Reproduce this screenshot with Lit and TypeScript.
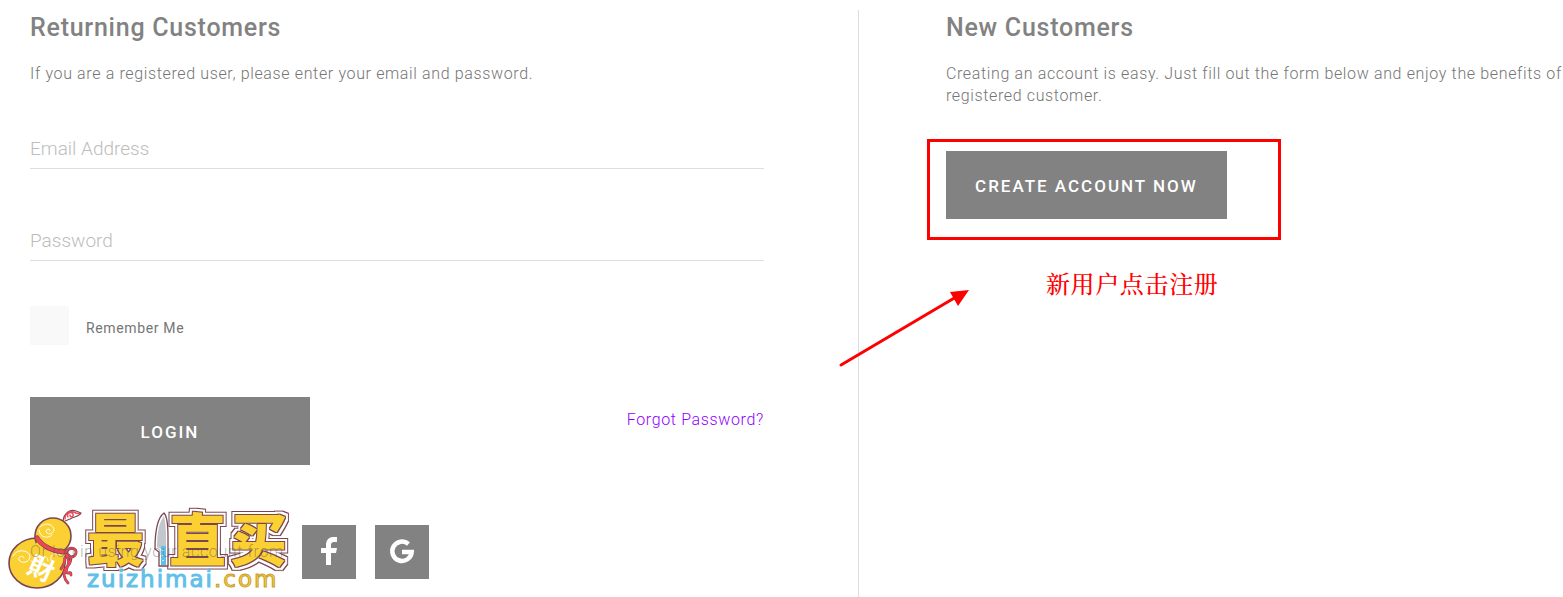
import { LitElement, html, css } from "lit";
import { customElement } from "lit/decorators.js";

@customElement("shop-logo")
class ShopLogo extends LitElement {
  static styles = css`
    :host { display: block; }
    .art { display: block; width: 288px; height: 84px; overflow: visible; }
    .name { font-family: "Noto Sans CJK SC", sans-serif; font-weight: 900; font-size: 57px; letter-spacing: 0; fill: #fbd033; }
    .domain { font-family: "DejaVu Sans", sans-serif; font-weight: 400; font-size: 23px; letter-spacing: 2px; stroke-width: 1px; }
    .blue { fill: #62bfe8; stroke: #62bfe8; }
    .gold { fill: #fbd033; stroke: #c79f35; }
    .seal { font-family: "Noto Sans CJK SC", sans-serif; font-weight: 700; font-size: 26px; letter-spacing: 0; fill: #ffffff; }
  `;

  render() {
    return html`
      <svg class="art" viewBox="0 0 288 84" role="img" aria-label="zuizhimai.com">
        <defs>
          <filter id="rings" x="-10%" y="-20%" width="120%" height="140%" color-interpolation-filters="sRGB">
            <feMorphology in="SourceAlpha" operator="dilate" radius="4" result="outer"/>
            <feMorphology in="SourceAlpha" operator="dilate" radius="3" result="middle"/>
            <feMorphology in="SourceAlpha" operator="dilate" radius="1" result="inner"/>
            <feFlood flood-color="#7b4650" result="brown"/>
            <feFlood flood-color="#ffffff" result="white"/>
            <feComposite in="brown" in2="outer" operator="in" result="rim"/>
            <feComposite in="white" in2="middle" operator="in" result="halo"/>
            <feComposite in="brown" in2="inner" operator="in" result="edge"/>
            <feMerge>
              <feMergeNode in="rim"/><feMergeNode in="halo"/><feMergeNode in="edge"/><feMergeNode in="SourceGraphic"/>
            </feMerge>
          </filter>
        </defs>
        <g fill="none" stroke-linecap="round" stroke-linejoin="round">
          <path d="M58 12C59 4 65 0 71 2L76 4C74 8 70 7 65 10L60 12" fill="#fff" stroke="#7b4650" stroke-width="1.2"/>
          <path d="M60 10C60 4 65 1 71 4L75 5M63 8C61 4 66 2 68 5C69 8 65 9 65 6" stroke="#ee4655" stroke-width="1.4"/>
          <ellipse cx="32" cy="54" rx="28" ry="25" fill="#fbd033" stroke="#7b4650" stroke-width="1.6"/>
          <circle cx="48" cy="27" r="18" fill="#fbd033" stroke="#7b4650" stroke-width="1.6"/>
          <path d="M32 33C39 40 50 45 62 43L57 51C47 50 36 46 29 38Z" fill="#fbd033"/>
          <path d="M35 18C41 12 49 16 49 21C48 26 41 26 41 22C42 19 46 20 45 22M34 21C35 29 43 30 47 26" stroke="#fff" stroke-width="1"/>
          <path d="M8 47C11 40 23 40 25 47C25 54 16 55 14 51C13 47 18 46 19 49M26 52C32 55 37 50 34 47C32 45 28 48 30 50M47 54C43 47 49 42 55 46M43 52C43 46 36 46 36 50" stroke="#fff" stroke-width="1"/>
          <path d="M32 29C37 37 48 43 61 43" stroke="#7b4650" stroke-width="5"/>
          <path d="M32 29C37 37 48 43 61 43" stroke="#ee4655" stroke-width="3.6"/>
          <path d="M61 43C65 37 72 39 71 44C70 49 64 49 62 45C68 48 66 54 62 58C57 63 59 70 63 74M61 46C67 53 61 58 61 63C63 66 66 61 66 66M60 49C60 57 57 57 56 60" stroke="#7b4650" stroke-width="2.8"/>
          <path d="M61 43C65 37 72 39 71 44C70 49 64 49 62 45C68 48 66 54 62 58C57 63 59 70 63 74M61 46C67 53 61 58 61 63C63 66 66 61 66 66M60 49C60 57 57 57 56 60" stroke="#ee4655" stroke-width="1.8"/>
        </g>
        <text class="seal" x="23" y="69" transform="rotate(24 36 60)">財</text>
        <g filter="url(#rings)">
          <text class="name" y="52"><tspan x="82">最</tspan><tspan x="164">直</tspan><tspan x="225">买</tspan></text>
        </g>
        <path d="M159 4C152 9 150 24 150 40L154 43V57H163V28C163 18 162 7 159 4Z" fill="#fff" stroke="#7b4650" stroke-width="1.3"/>
        <path d="M159 7C154 13 152 24 152 38L156 40H161V28C161 18 160 11 159 7Z" fill="#c2c7ce"/>
        <path d="M156 37H161V56H156Z" fill="#62bfe8"/>
        <path d="M158 41V42M158 46V47M158 51V52" stroke="#fff" stroke-width="1.2"/>
        <text class="domain" x="82" y="78"><tspan class="blue">zuizhimai</tspan><tspan class="gold">.com</tspan></text>
      </svg>`;
  }
}

@customElement("app-root")
class AppRoot extends LitElement {
  static styles = css`
    :host {
      display: block;
      font-family: Roboto, sans-serif;
      font-size: 16px;
      font-weight: 300;
      line-height: 22px;
      letter-spacing: 0.04em;
      color: #757575;
      background: #ffffff;
    }
    * { box-sizing: border-box; }
    .page { display: grid; grid-template-columns: 61fr 50fr; min-height: 100vh; padding-top: 10px; }
    .returning { position: relative; padding: 0 94px 16px 30px; border-right: 1px solid #dddddd; }
    .new { padding-left: 87px; }
    h1 { margin: 0; font-size: 25px; line-height: 36px; font-weight: 500; letter-spacing: 0.03em; color: #828282; }
    p { margin: 17px 0 0; }
    .field { display: grid; height: 43px; margin-top: 49px; border-bottom: 1px solid #dddddd; font-size: 19px; letter-spacing: 0; }
    .field:first-child { margin-top: 41px; }
    .field > * { grid-area: 1 / 1; }
    .field label { align-self: center; padding-top: 3px; color: #bdbdbd; pointer-events: none; }
    .field input { width: 100%; border: 0; padding: 3px 0 0; background: none; font: inherit; color: #757575; outline: 0; }
    .field input:not(:placeholder-shown) + label { visibility: hidden; }
    .remember { display: flex; align-items: center; gap: 17px; width: max-content; margin-top: 45px; font-size: 14px; font-weight: 400; }
    .remember span { padding-top: 4px; }
    .tick { appearance: none; width: 39px; height: 39px; margin: 0; background: #f9f9f9; }
    .tick:checked { background: #828282; }
    .actions { display: flex; justify-content: space-between; align-items: flex-start; margin-top: 52px; }
    .button { width: 280px; height: 68px; border: 0; padding: 1px 0 0; background: #828282; color: #ffffff; font: inherit; font-size: 17px; font-weight: 500; letter-spacing: 2px; cursor: pointer; }
    .call .button { width: 100%; }
    .forgot { margin-top: 12px; color: #8f00ff; text-decoration: none; }
    .social { display: flex; align-items: center; gap: 19px; margin-top: 60px; }
    .hint { position: relative; z-index: 1; flex: 0 0 253px; min-width: 0; white-space: nowrap; color: rgba(80, 80, 80, 0.45); pointer-events: none; }
    .network { display: grid; place-items: center; width: 54px; height: 54px; border: 0; padding: 0; background: #828282; cursor: pointer; }
    .network svg { display: block; width: 30px; height: 30px; }
    .logo { position: absolute; left: 5px; bottom: 4px; }
    .call { position: relative; width: 281px; margin-top: 44px; }
    .mark { position: absolute; left: -19px; top: -12px; width: 354px; height: 101px; border: 3px solid #ff0000; pointer-events: none; }
    .note { position: absolute; left: 100px; top: 116px; white-space: nowrap; font-family: "Noto Serif CJK SC", "Noto Sans CJK SC", serif; font-size: 24px; line-height: 32px; font-weight: 500; color: #ff0000; }
    .arrow { position: absolute; left: -108px; top: 136px; width: 134px; height: 82px; pointer-events: none; }
  `;

  render() {
    return html`
      <main class="page">
        <section class="returning">
          <h1>Returning Customers</h1>
          <p>If you are a registered user, please enter your email and password.</p>
          <form @submit=${(e: Event) => e.preventDefault()}>
            <div class="field">
              <input id="email" type="email" placeholder=" " />
              <label for="email">Email Address</label>
            </div>
            <div class="field">
              <input id="password" type="password" placeholder=" " />
              <label for="password">Password</label>
            </div>
            <label class="remember"><input class="tick" type="checkbox" /><span>Remember Me</span></label>
            <div class="actions">
              <button class="button" type="submit">LOGIN</button>
              <a class="forgot" href="#">Forgot Password?</a>
            </div>
          </form>
          <div class="social">
            <span class="hint">Or log in using your account from</span>
            <button class="network" type="button" aria-label="Facebook">
              <svg viewBox="0 0 30 30"><path fill="#fff" d="M12 28V16H7V11H12V8C12 3 15 0 19 0H23V5H20C18 5 17 6 17 8V11H23L22 16H17V28Z"/></svg>
            </button>
            <button class="network" type="button" aria-label="Google">
              <svg viewBox="0 0 30 30"><path d="M21.5 7A9.7 9.7 0 1 0 24.7 15H15" fill="none" stroke="#fff" stroke-width="4.5"/></svg>
            </button>
          </div>
          <shop-logo class="logo"></shop-logo>
        </section>
        <section class="new">
          <h1>New Customers</h1>
          <p>Creating an account is easy. Just fill out the form below and enjoy the benefits of registered customer.</p>
          <div class="call">
            <button class="button" type="button">CREATE ACCOUNT NOW</button>
            <div class="mark"></div>
            <div class="note">新用户点击注册</div>
            <svg class="arrow" viewBox="0 0 134 82" aria-hidden="true">
              <path d="M3 78L118 10" stroke="#ff0000" stroke-width="3" stroke-linecap="round"/>
              <path d="M131 3L112 5L120 19Z" fill="#ff0000"/>
            </svg>
          </div>
        </section>
      </main>`;
  }
}
